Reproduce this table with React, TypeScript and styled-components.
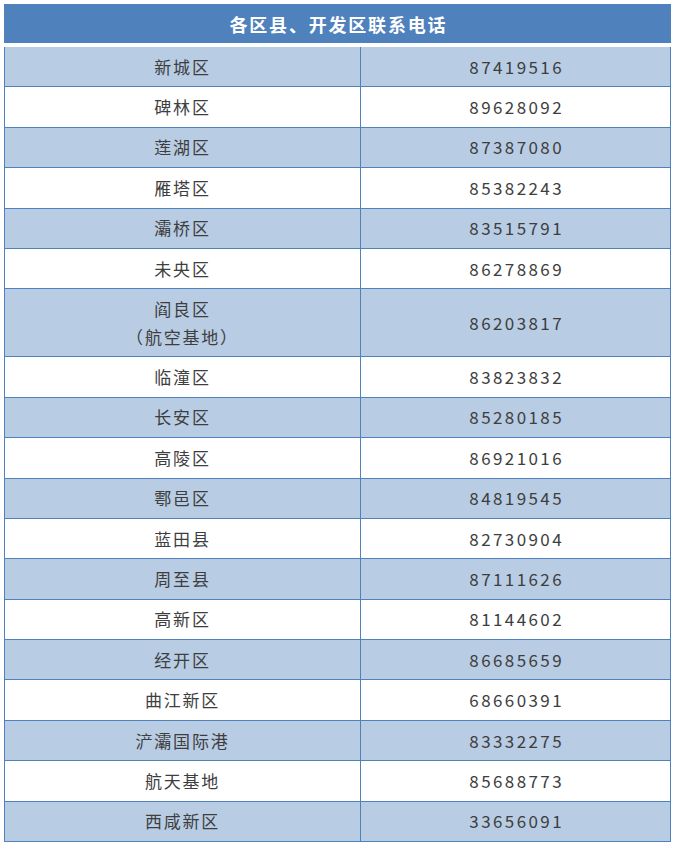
import React from "react";
import styled, { createGlobalStyle } from "styled-components";

const Global = createGlobalStyle`
  html, body { margin: 0; padding: 0; background: #ffffff; }
  body { font-family: "Noto Sans CJK SC", "Noto Sans", sans-serif; }
`;

const Page = styled.div`
  padding: 4px 4px 0 4px;
  width: 667px;
`;

const Header = styled.div`
  height: 39px;
  background: #4f81bd;
  color: #ffffff;
  font-weight: 700;
  font-size: 18px;
  letter-spacing: 1.8px;
  padding-left: 1.8px;
  display: flex;
  align-items: center;
  justify-content: center;
  margin-bottom: 4px;
`;

const Body = styled.div`
  border-left: 1px solid #4f81bd;
  border-right: 1px solid #4f81bd;
`;

const Row = styled.div<{ $striped: boolean; $tall?: boolean }>`
  display: grid;
  grid-template-columns: 355px 1fr;
  height: ${(p) => (p.$tall ? "68px" : "40.4px")};
  box-sizing: border-box;
  border-bottom: 1px solid #4f81bd;
  background: ${(p) => (p.$striped ? "#b8cce4" : "#ffffff")};
`;

const Cell = styled.div<{ $num?: boolean }>`
  display: flex;
  flex-direction: column;
  align-items: center;
  justify-content: center;
  color: #3e3e3e;
  font-size: 17px;
  line-height: 28px;
  letter-spacing: ${(p) => (p.$num ? "2.4px" : "1.8px")};
  ${(p) => (p.$num ? "border-left: 1px solid #4f81bd; padding-left: 2.4px;" : "")}
`;

const rows: { name: string[]; tel: string }[] = [
  { name: ["新城区"], tel: "87419516" },
  { name: ["碑林区"], tel: "89628092" },
  { name: ["莲湖区"], tel: "87387080" },
  { name: ["雁塔区"], tel: "85382243" },
  { name: ["灞桥区"], tel: "83515791" },
  { name: ["未央区"], tel: "86278869" },
  { name: ["阎良区", "（航空基地）"], tel: "86203817" },
  { name: ["临潼区"], tel: "83823832" },
  { name: ["长安区"], tel: "85280185" },
  { name: ["高陵区"], tel: "86921016" },
  { name: ["鄠邑区"], tel: "84819545" },
  { name: ["蓝田县"], tel: "82730904" },
  { name: ["周至县"], tel: "87111626" },
  { name: ["高新区"], tel: "81144602" },
  { name: ["经开区"], tel: "86685659" },
  { name: ["曲江新区"], tel: "68660391" },
  { name: ["浐灞国际港"], tel: "83332275" },
  { name: ["航天基地"], tel: "85688773" },
  { name: ["西咸新区"], tel: "33656091" },
];

export default function App() {
  return (
    <>
      <Global />
      <Page>
        <Header>各区县、开发区联系电话</Header>
        <Body>
          {rows.map((r, i) => (
            <Row key={r.tel} $striped={i % 2 === 0} $tall={r.name.length > 1}>
              <Cell>
                {r.name.map((n) => (
                  <span key={n}>{n}</span>
                ))}
              </Cell>
              <Cell $num>{r.tel}</Cell>
            </Row>
          ))}
        </Body>
      </Page>
    </>
  );
}
